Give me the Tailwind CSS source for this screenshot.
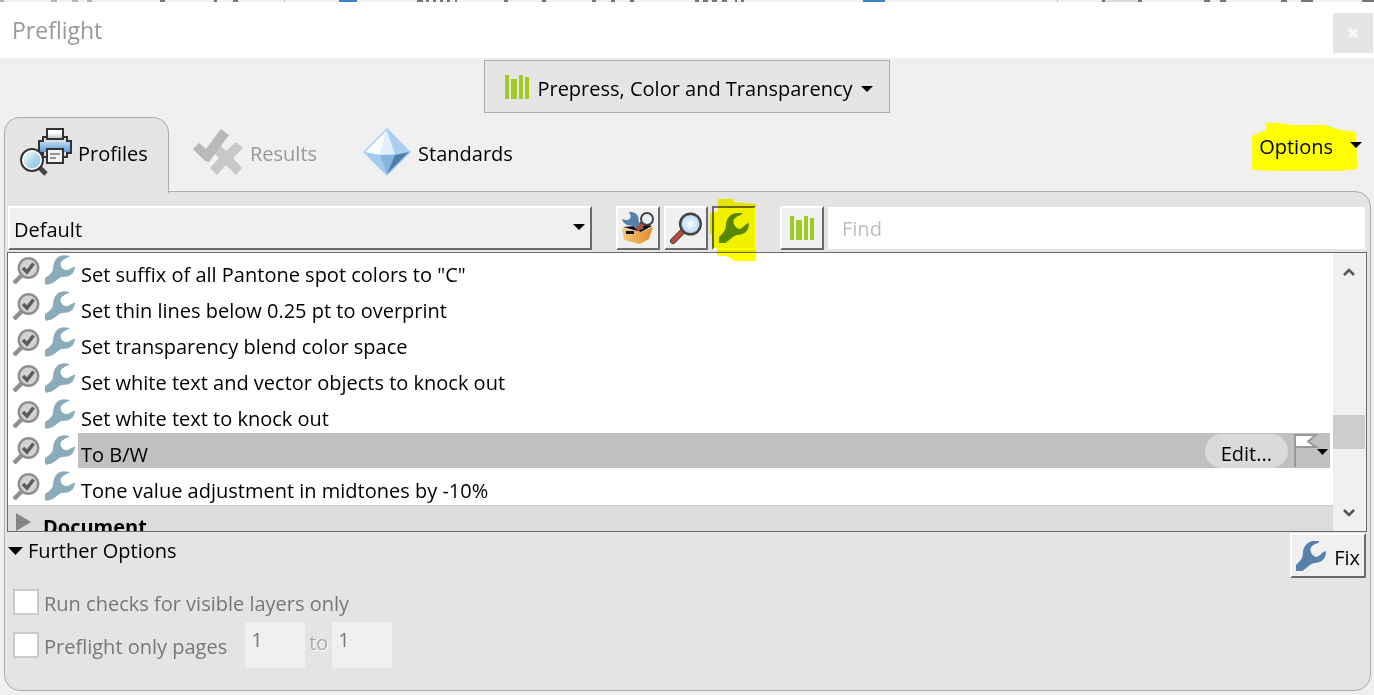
<!DOCTYPE html>
<html lang="en">

<head>
    <meta charset="UTF-8">
    <meta name="viewport" content="width=device-width, initial-scale=1.0">
    <title>Preflight</title>
    <script src="https://cdn.jsdelivr.net/npm/@tailwindcss/browser@4"></script>
</head>

<body class="flex h-screen flex-col overflow-hidden bg-[#f0f0f0] font-['Open_Sans','Noto_Sans',sans-serif] text-[20px] leading-[28px] text-black">

    <!-- shared icons -->
    <svg class="hidden">
        <symbol id="wrench" viewBox="0 0 30 30">
            <path d="M0 29.500V23C4 20 7.500 18 8 14C8.200 10 9 6 12 3C15 0 20-.5 25 1.500C20 3.500 15.500 6 15.500 9C15.500 12 18 14.500 20.500 15C24 15.500 26 12.500 30 11.500C29.500 17 27 20.500 22 21.500C18 22 16 21.500 13 24C9 27.500 6 29.500 0 29.500Z" fill="currentColor" />
        </symbol>
        <symbol id="wrench-open" viewBox="0 0 30 30">
            <path d="M0 30V24C4 20.500 7 17 7 12C7 5 12 0 18 0H23V1.500C19 3 15 4.500 14.500 8C14.300 12 17 15.500 20.500 16C24 15 26 11 30 10C30 16 27.500 20 22 21.500C17 22 14.500 23 12 25.500L6.500 30Z" fill="currentColor" />
        </symbol>
        <symbol id="check-lens" viewBox="0 0 28 28">
            <path d="M9.500 19.500L2 27" stroke="#8f8f8f" stroke-width="4.500" />
            <circle cx="16.500" cy="12" r="9.700" fill="#d2d2d2" stroke="#8f8f8f" stroke-width="2.500" />
            <path d="M11 12L15 16L21.500 7.500" fill="none" stroke="#5c5c5c" stroke-width="3.500" />
        </symbol>
        <symbol id="bars" viewBox="0 0 24 24">
            <path d="M0 0H4V24H0ZM6 4H12V24H6ZM14 0H18V24H14ZM20 2H24V24H20Z" fill="#a0ca24" />
        </symbol>
        <symbol id="down" viewBox="0 0 12 6">
            <path d="M0 0H12L6 6Z" fill="currentColor" />
        </symbol>
    </svg>

    <!-- sliver of the window behind -->
    <svg class="h-[2px] w-full shrink-0" viewBox="0 0 1374 2" preserveAspectRatio="none">
        <rect width="1374" height="2" fill="#f1f1f1" />
        <path d="M0 1H4M51 1H57M72 1H78M87 1H92" stroke="#b5b5b5" stroke-width="2" />
        <path d="M160 1H165M214 1H217M233 1H238M417 1H423M426 1H429M433 1H436M440 1H443M447 1H450M455 1H457M504 1H508M542 1H546M592 1H596M611 1H615M630 1H634M695 1H699M703 1H708M712 1H717M722 1H727M735 1H737M741 1H744M1102 1H1105M1138 1H1142M1204 1H1210M1220 1H1226M1281 1H1287M1301 1H1313M1362 1H1374" stroke="#777" stroke-width="2" />
        <path d="M339 1H357M863 1H885" stroke="#3b82c8" stroke-width="2" />
        <path d="M1105 1H1138" stroke="#ddd" stroke-width="2" />
        <path d="M284 1H285M1057 1H1058" stroke="#bbb" stroke-width="2" />
    </svg>

    <header class="flex h-14 shrink-0 items-center justify-between bg-white pr-[1px] pl-3">
        <h1 class="text-[23px] text-[#999]">Preflight</h1>
        <button aria-label="Close" class="mt-[6px] flex size-10 items-center justify-center bg-[#e5e5e5]">
            <svg class="size-[10px]" viewBox="0 0 10 10"><path d="M1 1L9 9M9 1L1 9" stroke="#f8f8f8" stroke-width="2.500" /></svg>
        </button>
    </header>

    <div class="flex shrink-0 justify-center pt-[2px]">
        <button class="flex h-[53px] items-center border border-[#adadad] bg-[#e5e5e5] pr-4 pl-5">
            <svg class="mr-2 size-6"><use href="#bars" /></svg>
            <span class="pt-[5px]">Prepress, Color and Transparency</span>
            <svg class="mt-1 ml-2 h-[6px] w-3"><use href="#down" /></svg>
        </button>
    </div>

    <nav class="relative z-10 mt-1 -mb-[2px] ml-1 flex h-[76px] shrink-0 items-start">
        <button class="flex h-full w-[165px] items-start rounded-t-[16px] border border-b-0 border-[#adadad] bg-[#e4e4e4] pt-[10px] pl-[15px]">
            <svg class="mr-[6px] h-12 w-[52px]" viewBox="0 0 52 48">
                <defs>
                    <linearGradient id="blue" x2="0" y2="1"><stop stop-color="#b7d7f4" /><stop offset="1" stop-color="#5e9ad6" /></linearGradient>
                    <linearGradient id="glass" x2="1" y2="1"><stop stop-color="#fff" /><stop offset=".6" stop-color="#a9d3ec" /><stop offset="1" stop-color="#8fc4e2" /></linearGradient>
                    <linearGradient id="paper" x2="0" y2="1"><stop offset=".4" stop-color="#fff" /><stop offset="1" stop-color="#bbb" /></linearGradient>
                </defs>
                <path d="M23 9H47V13H51V25H47V29H23V25H19V13H23Z" fill="#ddd" stroke="#333" stroke-width="2" />
                <path d="M20 14H50V24H20Z" fill="url(#blue)" />
                <path d="M27 1H43V11H27Z" fill="url(#paper)" stroke="#333" stroke-width="2" />
                <path d="M27 21H43V35H27Z" fill="#f4f4f4" stroke="#333" stroke-width="2" />
                <path d="M30 26H40M30 30H36" stroke="#777" stroke-width="1.500" />
                <path d="M20 40L26 46" stroke="#444" stroke-width="5" />
                <circle cx="12" cy="32" r="11" fill="#fff" stroke="#333" stroke-width="2" />
                <circle cx="12" cy="32" r="8.500" fill="url(#glass)" />
            </svg>
            <span class="pt-3">Profiles</span>
        </button>
        <button disabled class="ml-6 flex items-start pt-[11px] text-[#999]">
            <svg class="mr-[7px] h-12 w-[50px]" viewBox="0 0 50 48">
                <path d="M27 17L33 23L43 14L50 20L40 30L49 40L43 47L33 37L24 47L17 40L26 30L20 24Z" fill="#c8c8c8" />
                <path d="M0 21L6 15L13 21L28 1L36 7L16 34L12 33Z" fill="#b9b9b9" />
            </svg>
            <span class="pt-3">Results</span>
        </button>
        <button class="ml-[46px] flex items-start pt-[11px]">
            <svg class="mr-[7px] h-12 w-12" viewBox="0 0 48 48">
                <path d="M24 0L48 24L24 48L0 24Z" fill="#a6cdf0" />
                <path d="M24 2L17 27L2 24Z" fill="#fafdff" />
                <path d="M24 2L32 26L17 27Z" fill="#e0effb" />
                <path d="M24 2L46 23L32 26Z" fill="#aacfee" />
                <path d="M2 25L17 27L24 46Z" fill="#a5cbed" />
                <path d="M17 27H32L24 46Z" fill="#83b3de" />
                <path d="M46 24L32 27L24 46Z" fill="#4f7ea9" />
            </svg>
            <span class="pt-3">Standards</span>
        </button>
        <button class="relative mt-[6px] mr-3 ml-auto flex h-12 items-center pl-[7px]">
            <span>Options</span>
            <svg class="-mt-1 ml-[17px] h-[6px] w-3"><use href="#down" /></svg>
            <svg class="absolute top-0 left-0 h-12 w-[105px] mix-blend-multiply" viewBox="0 0 105 48"><path d="M0 13L14 7V0H26L38 2H72L88 7L104 9L105 46L88 48H26L0 47Z" fill="#ff0" /></svg>
        </button>
    </nav>

    <main class="mr-[3px] mb-1 ml-1 flex min-h-0 flex-1 flex-col rounded-[16px] rounded-tl-none border border-[#adadad] bg-[#e4e4e4] pt-[14px] pr-[3px] pl-[2px]">

        <div class="flex h-[46px] shrink-0 items-start pr-[2px] pl-[1px]">
            <div class="relative mr-6 h-11 w-[584px]">
                <select aria-label="Library" class="h-full w-full appearance-none border-t-2 border-r-2 border-b-2 border-l-2 border-t-white border-r-[#6a6a6a] border-b-[#6a6a6a] border-l-white bg-[#f0f0f0] pt-[3px] pl-1">
                    <option>Default</option>
                </select>
                <svg class="pointer-events-none absolute top-[18px] right-[7px] h-[6px] w-3"><use href="#down" /></svg>
            </div>
            <button aria-label="Select profiles" class="mr-1 flex size-11 items-center justify-center border-2 border-t-white border-r-[#6a6a6a] border-b-[#6a6a6a] border-l-white bg-[#f0f0f0]">
                <svg class="size-8" viewBox="0 0 32 32">
                    <defs><linearGradient id="box" x2="1"><stop stop-color="#f8c878" /><stop offset="1" stop-color="#dd8d2c" /></linearGradient></defs>
                    <path d="M1 15L13 14L19 10L30 14L19 20Z" fill="#111" />
                    <path d="M7 0C13-.5 17 3 16.500 8C17 12 20 14 22 17L15 18C13 16 12 14 9 13.500C4 13.500 1 11 0 7C4 9 8 8 8.500 5.500C9 3 7.500 2 7 0Z" fill="#5580ab" />
                    <path d="M22 11L15 18" stroke="#b5503f" stroke-width="4" />
                    <path d="M0 16L19 20L31 15L27 27L18 32L2 28Z" fill="url(#box)" />
                    <path d="M4 19H12V22H4Z" fill="#111" />
                    <circle cx="25" cy="7" r="6" fill="#e4f1fa" stroke="#444" stroke-width="2" />
                </svg>
            </button>
            <button aria-label="Select checks" class="mr-1 flex size-11 items-center justify-center border-2 border-t-white border-r-[#6a6a6a] border-b-[#6a6a6a] border-l-white bg-[#f0f0f0]">
                <svg class="size-8" viewBox="0 0 32 32">
                    <path d="M12 20L3 29" stroke="#53302c" stroke-width="6" stroke-linecap="round" />
                    <path d="M12 20L3 29" stroke="#b5503f" stroke-width="4" stroke-linecap="round" />
                    <circle cx="20.500" cy="12" r="10.300" fill="url(#lens)" stroke="#444" stroke-width="2.500" />
                    <defs><radialGradient id="lens"><stop stop-color="#fff" /><stop offset="1" stop-color="#a9d5f2" /></radialGradient></defs>
                </svg>
            </button>
            <button aria-label="Select single fixups" class="relative mr-6 flex size-11 items-center justify-center border-2 border-t-[#6a6a6a] border-r-white border-b-white border-l-[#6a6a6a] bg-[#f0f0f0] text-[#5a860f]">
                <svg class="size-[30px]"><use href="#wrench-open" /></svg>
                <svg class="absolute -top-[9px] -left-[4px] h-[62px] w-[46px] mix-blend-multiply" viewBox="0 0 46 62"><path d="M8 0H23V3L46 5V62H25L16 57H7V50L2 48V36L0 34V14L8 12Z" fill="#ff0" /></svg>
            </button>
            <button aria-label="Library items" class="mr-1 flex size-11 items-center justify-center border-2 border-t-white border-r-[#6a6a6a] border-b-[#6a6a6a] border-l-white bg-[#f0f0f0]">
                <svg class="size-6"><use href="#bars" /></svg>
            </button>
            <input type="text" aria-label="Find" placeholder="Find" class="mt-[1px] h-[42px] min-w-0 flex-1 bg-white px-[14px] outline-none placeholder:text-[#bdbdbd]">
        </div>

        <div class="flex min-h-0 flex-1 border border-[#6a6a6a] bg-white">
            <div class="flex min-w-0 flex-1 flex-col overflow-hidden">
                <ul id="fixups" class="shrink-0"></ul>
                <div class="flex min-h-0 flex-1 items-start overflow-hidden border-t border-[#ccc] bg-[#dcdcdc] pl-2 font-bold">
                    <svg class="mt-[7px] mr-3 h-[18px] w-[15px]" viewBox="0 0 15 18"><path d="M0 0L15 9L0 18Z" fill="#858585" /></svg>
                    <span class="pt-[7px]">Document</span>
                </div>
            </div>
            <div class="flex w-[33px] flex-col justify-between bg-[#f0f0f0] pr-[1px]">
                <button aria-label="Scroll up" class="flex h-9 w-full items-center justify-center"><svg class="h-[9px] w-3" viewBox="0 0 12 9"><path d="M1 8L6 3L11 8" fill="none" stroke="#555" stroke-width="2.500" /></svg></button>
                <div class="mt-20 h-[34px] bg-[#cdcdcd]"></div>
                <button aria-label="Scroll down" class="flex h-9 w-full items-center justify-center"><svg class="h-[9px] w-3" viewBox="0 0 12 9"><path d="M1 1L6 6L11 1" fill="none" stroke="#555" stroke-width="2.500" /></svg></button>
            </div>
        </div>

        <div class="flex shrink-0 items-start justify-between pt-[1px] pr-[1px] pl-[1px]">
            <button class="flex items-center pt-1">
                <svg class="mr-[5px] h-2 w-[15px]" viewBox="0 0 12 6" preserveAspectRatio="none"><path d="M0 0H12L6 6Z" /></svg>
                <span>Further Options</span>
            </button>
            <button class="flex h-[45px] items-center border-2 border-t-white border-r-[#6a6a6a] border-b-[#6a6a6a] border-l-white bg-[#f0f0f0] px-1">
                <svg class="mr-2 size-[30px] text-[#5681ab]"><use href="#wrench-open" /></svg>
                <span class="pt-1">Fix</span>
            </button>
        </div>

        <div class="flex shrink-0 flex-col pt-[11px] pb-[22px] pl-[6px] text-[#777]">
            <div class="flex h-[33px] items-start">
                <input id="layers" type="checkbox" disabled class="mr-[5px] size-[26px] appearance-none border-2 border-[#cbcbcb] bg-white">
                <label for="layers" class="pt-[1px]">Run checks for visible layers only</label>
            </div>
            <div class="flex h-[46px] items-start">
                <input id="pages" type="checkbox" disabled class="mt-[10px] mr-[5px] size-[26px] appearance-none border-2 border-[#cbcbcb] bg-white">
                <label for="pages" class="mr-[18px] pt-[11px]">Preflight only pages</label>
                <input type="text" aria-label="First page" value="1" disabled class="h-[46px] w-[60px] bg-[#f0f0f0] px-[6px] pb-3">
                <label for="last" class="w-[27px] pt-[7px] text-center text-[#aaa] [text-shadow:1px_1px_0_#fff]">to</label>
                <input id="last" type="text" value="1" disabled class="h-[46px] w-[60px] bg-[#f0f0f0] px-[6px] pb-3">
            </div>
        </div>
    </main>

    <script>
        const fixups = [
            'Set suffix of all Pantone spot colors to "C"',
            'Set thin lines below 0.25 pt to overprint',
            'Set transparency blend color space',
            'Set white text and vector objects to knock out',
            'Set white text to knock out',
            'To B/W',
            'Tone value adjustment in midtones by -10%'
        ];
        const selected = 'To B/W';

        const actions = `
            <button class="mt-[1px] mr-[6px] ml-auto h-[34px] rounded-full bg-[#dadada] px-4 pt-[6px]">Edit...</button>
            <button aria-label="Flag" class="mt-[1px]">
                <svg class="h-[33px] w-9" viewBox="0 0 36 33">
                    <path d="M1 0V33" stroke="#999" stroke-width="2" />
                    <path d="M1 1H22L14 7.500L22 13H1Z" fill="#fff" stroke="#999" stroke-width="2" />
                    <path d="M23 15H34L28.500 21Z" />
                </svg>
            </button>`;

        document.getElementById("fixups").innerHTML = fixups.map((name) => `
            <li class="flex h-9 items-start pl-1">
                <svg class="mt-[3px] mr-[5px] size-7"><use href="#check-lens" /></svg>
                <svg class="mt-[2px] mr-[3px] size-[30px] text-[#8aabb9]"><use href="#wrench" /></svg>
                <div class="mr-[3px] flex h-[35px] min-w-0 flex-1 items-start pl-[3px] ${name === selected ? "bg-[#c0c0c0]" : ""}">
                    <span class="pt-2 whitespace-nowrap">${name}</span>
                    ${name === selected ? actions : ""}
                </div>
            </li>`).join("");
    </script>

</body>
</html>
